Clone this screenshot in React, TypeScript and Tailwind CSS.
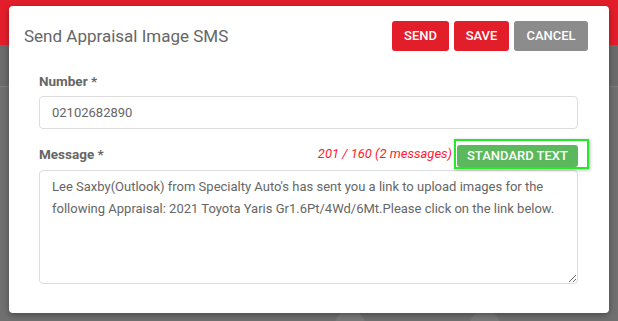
import React from "react";

const message =
  "Lee Saxby(Outlook) from Specialty Auto's has sent you a link to upload images for the following Appraisal: 2021 Toyota Yaris Gr1.6Pt/4Wd/6Mt.Please click on the link below.";

export default function App() {
  return (
    <div className="relative h-[321px] w-[618px] overflow-hidden bg-[#6f6f6f] font-['Roboto',sans-serif]">
      {/* page behind the overlay */}
      <div className="flex flex-col">
        <div className="h-[45px] bg-[#e31e2b]" />
        <div className="h-[41px] bg-[#6b6b6b]" />
        <div className="h-[1px] bg-[#7c7c7c]" />
        <div className="relative h-[234px] bg-[#707070]">
          <div className="absolute left-[335px] top-[223px] h-[30px] w-[30px] rounded-full bg-[#7a7a7a]" />
          <div className="absolute left-[470px] top-[223px] h-[30px] w-[30px] rounded-full bg-[#7a7a7a]" />
        </div>
      </div>

      {/* dialog */}
      <div className="absolute left-[9px] top-[6px] h-[307px] w-[600px] rounded-[4px] bg-white shadow-[0_2px_6px_rgba(0,0,0,0.35)]">
        <div className="flex items-center justify-between pl-[15px] pr-[21px] pt-[15px]">
          <h2 className="text-[17px] leading-[30px] text-[#666666]">Send Appraisal Image SMS</h2>
          <div className="flex gap-[5px]">
            <button className="h-[30px] w-[57px] rounded-[3px] bg-[#e31e2b] text-[13px] font-medium text-white">SEND</button>
            <button className="h-[30px] w-[55px] rounded-[3px] bg-[#e31e2b] text-[13px] font-medium text-white">SAVE</button>
            <button className="h-[30px] w-[74px] rounded-[3px] bg-[#8c8c8c] text-[13px] font-medium text-white">CANCEL</button>
          </div>
        </div>

        <div className="px-[30px] pr-[31px]">
          <label className="mt-[20px] block text-[13.5px] font-bold leading-[20px] text-[#666666]">Number *</label>
          <div className="mt-[5px] flex h-[33px] items-center rounded-[4px] border border-[#dcdcdc] px-[12px] text-[13px] text-[#666666]">
            02102682890
          </div>

          <div className="mr-[-11px] mt-[10px] flex h-[30px] items-center justify-between">
            <label className="text-[13.5px] font-bold text-[#666666]">Message *</label>
            <div className="flex items-center">
              <span className="mr-[2px] text-[13px] italic text-[#ff1a2e]">201 / 160 (2 messages)</span>
              <div className="flex h-[30px] w-[135px] items-start border-2 border-[#27e827] pl-[1px] pt-[4px] shadow-[1px_1px_3px_rgba(0,0,0,0.3)]">
                <button className="h-[22px] w-[121px] rounded-[3px] bg-[#5cb85c] text-[13px] font-medium leading-[22px] text-white">
                  STANDARD TEXT
                </button>
              </div>
            </div>
          </div>

          <textarea
            readOnly
            value={message}
            className="mt-[1px] block h-[114px] w-full resize-y rounded-[4px] border border-[#dcdcdc] px-[12px] py-[5px] text-[13px] leading-[22px] text-[#666666] outline-none"
          />
        </div>
      </div>
    </div>
  );
}
